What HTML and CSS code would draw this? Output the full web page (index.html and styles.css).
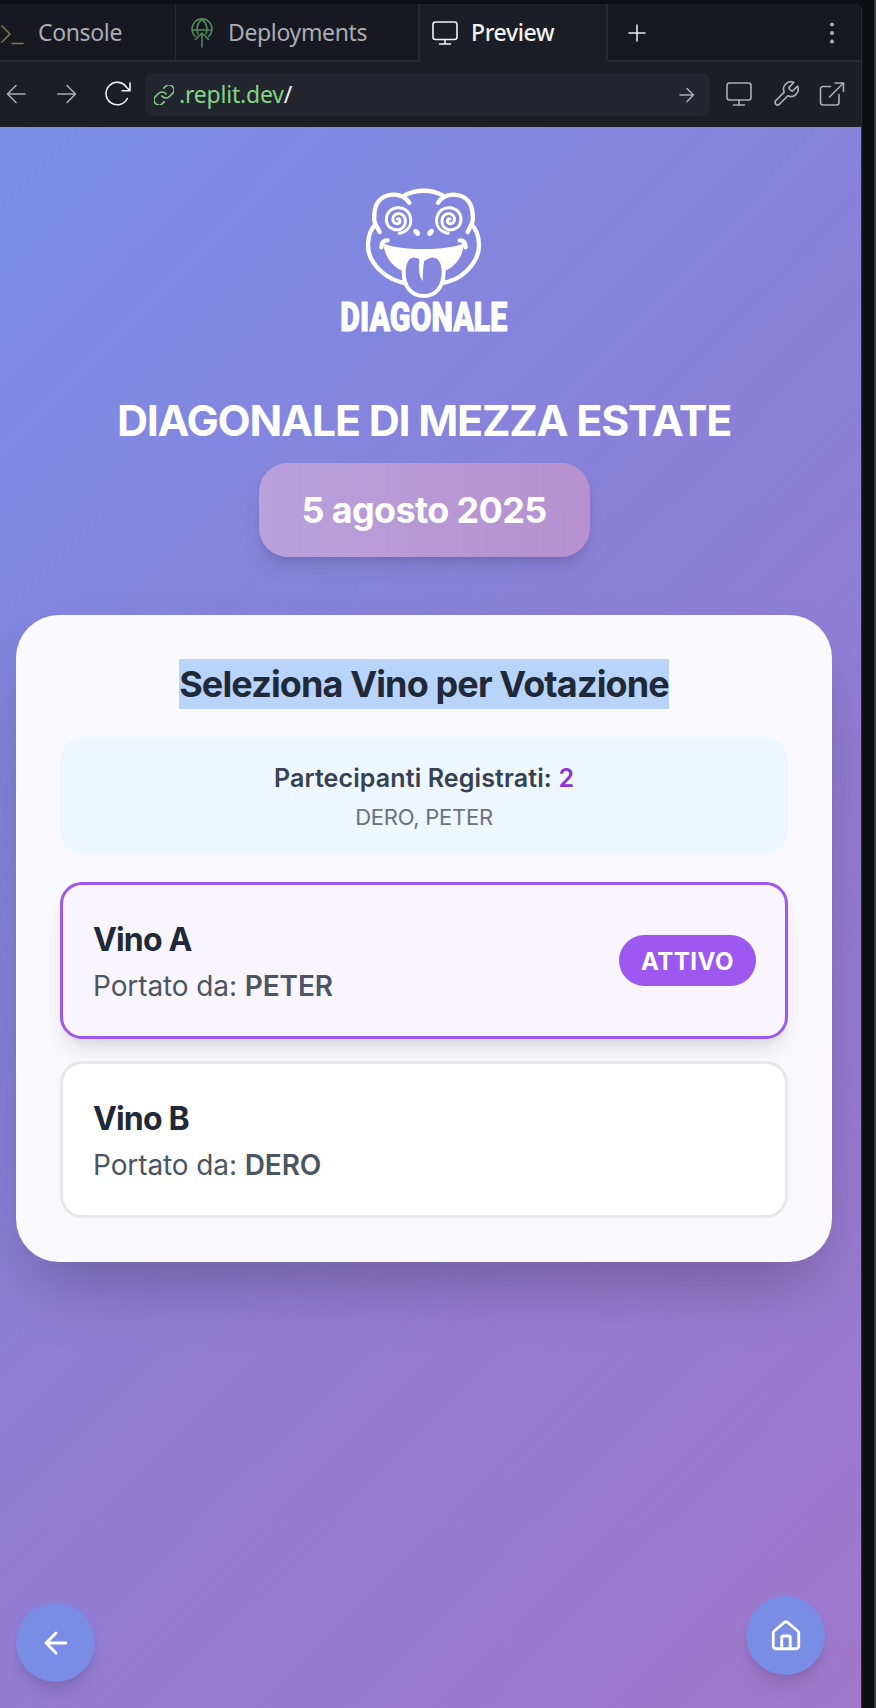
FILE: index.html
```html
<!DOCTYPE html>
<html lang="it">
<head>
<meta charset="utf-8">
<title>Diagonale di Mezza Estate</title>
<link rel="stylesheet" href="styles.css">
</head>
<body>
<div class="window">
  <div class="pane">
    <nav class="tabs">
      <div class="tab tab-console">
        <svg class="ic-console" width="24" height="28" viewBox="0 0 24 28"><path d="M2 7l8 8-8 8M12 24.500h11"/></svg>
        <span class="t-console">Console</span>
      </div>
      <div class="tab tab-deploy">
        <svg class="ic-deploy" width="22" height="30" viewBox="0 0 22 30"><path d="M4.500 18.500A10 10 0 1 1 17.500 18.500M1.500 12h19M11 1.500C5.500 5 5.500 12 7 16M11 1.500C16.500 5 16.500 12 15 16M11 29V15M4.500 21.500L11 15l6.500 6.500"/></svg>
        <span class="t-deploy">Deployments</span>
      </div>
      <div class="tab tab-preview">
        <svg width="26" height="26" viewBox="0 0 26 26"><rect x="1" y="2" width="24" height="17.500" rx="2.500"/><path d="M13 19.500V24M7.500 24h11"/></svg>
        <span class="t-preview">Preview</span>
      </div>
      <div class="tab-rest">
        <svg width="18" height="18" viewBox="0 0 18 18"><path d="M9 1v16M1 9h16"/></svg>
        <svg class="ic-dots" width="6" height="24" viewBox="0 0 6 24"><circle cx="3" cy="3.500" r="2"/><circle cx="3" cy="12" r="2"/><circle cx="3" cy="20.500" r="2"/></svg>
      </div>
    </nav>
    <div class="toolbar">
      <svg class="ic-back" width="20" height="20" viewBox="0 0 20 20"><path d="M19 10H1.500M10 1.500L1.500 10l8.500 8.500"/></svg>
      <svg class="ic-next" width="20" height="20" viewBox="0 0 20 20"><path d="M1 10h17.500M10 1.500l8.500 8.500-8.500 8.500"/></svg>
      <svg class="ic-reload" width="28" height="26" viewBox="0 0 28 26"><path d="M23.300 17.500A11.200 11.200 0 1 1 22.500 6.200L26 9.800M26 2v7.800h-7.800"/></svg>
      <div class="url">
        <svg class="ic-link" width="20" height="20" viewBox="2 2 20 20"><path d="M10 13a5 5 0 0 0 7.540.54l3-3a5 5 0 0 0-7.070-7.070l-1.720 1.710M14 11a5 5 0 0 0-7.540-.54l-3 3a5 5 0 0 0 7.070 7.070l1.710-1.710"/></svg>
        <span class="host">.replit.dev<b>/</b></span>
        <svg class="ic-go" width="16" height="16" viewBox="0 0 16 16"><path d="M1 8h13.500M8 1.500L14.500 8 8 14.500"/></svg>
      </div>
      <svg class="ic-screen" width="28" height="26" viewBox="0 0 28 26"><rect x="2" y="2" width="24" height="17" rx="2.500"/><path d="M14 19v5M8.500 24h11"/></svg>
      <svg class="ic-wrench" width="28" height="28" viewBox="0.500 0.500 23 23"><path d="M14.700 6.300a1 1 0 0 0 0 1.400l1.600 1.600a1 1 0 0 0 1.400 0l3.770-3.770a6 6 0 0 1-7.940 7.940l-6.910 6.910a2.120 2.120 0 0 1-3-3l6.910-6.910a6 6 0 0 1 7.940-7.940l-3.760 3.760z"/></svg>
      <svg class="ic-open" width="26" height="26" viewBox="0 0 26 26"><path d="M11.500 5.500H4a2.500 2.500 0 0 0-2.500 2.500v13.500A2.500 2.500 0 0 0 4 24h13.500a2.500 2.500 0 0 0 2.500-2.500V13.500M16 2h8.500v8.500M24.500 2L10.500 16"/></svg>
    </div>
    <main class="page">
      <svg class="logo" width="210" height="180" viewBox="0 0 630 540">
        <g class="line">
          <path d="M250 78C285 57 337 57 372 78"/>
          <path d="M268 98C242 62 193 71 175 95C162 112 160 146 165 160L179 186"/>
          <path d="M354 98C380 62 428 71 446 95C459 112 461 146 456 160L443 186"/>
          <path d="M166 163C139 193 137 245 160 277C182 310 218 333 254 339"/>
          <path d="M455 163C482 193 484 245 461 277C439 310 404 333 367 339"/>
          <path d="M184 232C184 217 192 211 203 211M437 232C437 217 430 211 419 211"/>
        </g>
        <g class="spiral">
          <path d="M238 190C264 184 274 166 272 147C269 123 251 112 234 113C212 114 198 130 199 150C201 171 216 180 233 180C250 178 258 164 256 149C254 136 243 129 232 131C221 134 217 143 219 152C222 162 234 164 239 157C242 150 238 145 232 147"/>
          <path d="M384 190C358 184 348 166 350 147C353 123 371 112 388 113C410 114 424 130 423 150C421 171 406 180 389 180C372 178 364 164 366 149C368 136 379 129 390 131C401 134 405 143 403 152C400 162 388 164 383 157C380 150 384 145 390 147"/>
        </g>
        <path class="solid" d="M190 220C230 243 390 243 432 220C430 260 402 297 364 306L258 306C220 297 193 260 190 220Z"/>
        <path class="tongue" d="M304 265C270 242 251 270 251 306C251 350 275 378 311 378C348 378 371 350 371 306C371 270 350 242 316 264C311 270 306 266 304 265Z"/>
        <path class="solid" d="M299 262Q306 270 314 263Q308 294 308 334Q292 315 299 262Z"/>
        <ellipse class="solid" cx="290" cy="187" rx="8" ry="12" transform="rotate(-40 290 187)"/>
        <ellipse class="solid" cx="332" cy="187" rx="8" ry="12" transform="rotate(40 332 187)"/>
        <text x="61" y="482" textLength="501" lengthAdjust="spacingAndGlyphs">DIAGONALE</text>
      </svg>
      <h1>DIAGONALE DI MEZZA ESTATE</h1>
      <div class="date"><span>5 agosto 2025</span></div>
      <section class="card">
        <h2><span>Seleziona Vino per Votazione</span></h2>
        <div class="info">
          <p class="count">Partecipanti Registrati: <b>2</b></p>
          <p class="names">DERO, PETER</p>
        </div>
        <div class="wine active">
          <div>
            <h3>Vino A</h3>
            <p>Portato da: <b>PETER</b></p>
          </div>
          <span class="pill">ATTIVO</span>
        </div>
        <div class="wine">
          <div>
            <h3>Vino B</h3>
            <p>Portato da: <b>DERO</b></p>
          </div>
        </div>
      </section>
      <footer>
        <button class="round" aria-label="Indietro"><svg width="34" height="34" viewBox="0 0 24 24"><path d="M12 19l-7-7 7-7M19 12H5"/></svg></button>
        <button class="round home" aria-label="Home"><svg width="34" height="34" viewBox="0 0 24 24"><path d="M15 21v-8a1 1 0 0 0-1-1h-4a1 1 0 0 0-1 1v8"/><path d="M3 10a2 2 0 0 1 .71-1.530l7-6a2 2 0 0 1 2.580 0l7 6A2 2 0 0 1 21 10v9a2 2 0 0 1-2 2H5a2 2 0 0 1-2-2z"/></svg></button>
      </footer>
    </main>
  </div>
</div>
</body>
</html>
```

FILE: styles.css
```css
* { box-sizing: border-box; }
body { margin: 0; background: #0e0f13; font-family: Inter, sans-serif; }
h1, h2, h3, p { margin: 0; }
svg { flex: none; display: block; fill: none; stroke: currentColor; stroke-width: 1.6; stroke-linecap: round; stroke-linejoin: round; }
.window { width: 876px; height: 1708px; padding-top: 4px; border-right: 2px solid #37383d; background: #0e0f13; overflow: hidden; }
.pane { width: 862px; height: 1704px; display: flex; flex-direction: column; border-top-right-radius: 7px; overflow: hidden; border-right: 1px solid #2b2c3b; background: #1b1e24; }

.tabs { display: flex; height: 58px; flex: none; font-family: "Noto Sans", sans-serif; font-size: 23px; letter-spacing: -.35px; color: #a9adb6; }
.tab, .tab-rest { display: flex; align-items: center; background: #181820; border-bottom: 2px solid #262932; }
.tab { white-space: nowrap; }
.tab-console { width: 176px; border-right: 1px solid #262932; }
.tab-deploy { width: 244px; padding-left: 15px; border-right: 2px solid #262932; }
.tab-preview { width: 188px; padding-left: 12px; background: #1b1e24; border-bottom-color: #1b1e24; border-right: 2px solid #262932; color: #f1f2f4; }
.tab-rest { flex: 1; justify-content: space-between; padding: 2px 26px 0 20px; color: #e8e9ec; }
.tab svg { margin-top: 2px; }
.tabs .ic-console { color: #837750; margin-right: 14px; }
.tabs .ic-deploy { color: #51855a; margin-right: 15px; }
.tabs .ic-dots { fill: #a9adb6; stroke: none; }
.t-preview { margin-left: 13px; font-weight: 500; }

.toolbar { display: flex; align-items: center; height: 65px; flex: none; color: #a9adb6; }
.toolbar > svg { margin-bottom: 1px; }
.toolbar .ic-back { margin-left: 6px; }
.toolbar .ic-next { margin-left: 31px; }
.toolbar .ic-reload { margin-left: 27px; color: #eff0f2; }
.url { display: flex; align-items: center; width: 565px; height: 43px; margin-left: 13px; padding: 0 15px 0 9px; border-radius: 8px; background: #23262e; color: #86d486; font-family: "Noto Sans", sans-serif; font-size: 23px; letter-spacing: -.2px; }
.ic-link { margin-right: 5px; }
.host { padding-bottom: 2px; }
.host b { font-weight: 400; color: #eff0f2; }
.url .ic-go { margin-left: auto; color: #a9adb6; }
.ic-screen { margin-left: 15px; }
.ic-wrench { margin-left: 19px; stroke-width: 1.35; }
.ic-open { margin-left: 19px; }

.page { flex: 1; display: flex; flex-direction: column; align-items: center; padding: 43px 29px 26px 16px; background: linear-gradient(135deg, #798ee6 0%, #8b80d8 42%, #a078cc 100%); }
.logo { position: relative; left: 1px; overflow: visible; color: #fff; }
.line { stroke-width: 13; }
.spiral { stroke-width: 9; }
.solid { fill: #fff; stroke: none; }
.tongue { fill: #8587de; stroke-width: 12; }
.logo text { fill: #fff; stroke: #fff; stroke-width: 3; font: 900 122px Roboto, sans-serif; }
h1 { margin-top: 46px; font-size: 43px; line-height: 49px; font-weight: 700; letter-spacing: -1.25px; color: #fff; white-space: nowrap; }
.date { display: flex; align-items: center; justify-content: center; width: 331px; height: 94px; flex: none; margin-top: 18px; border-radius: 29px; background: linear-gradient(90deg, #b9a1dc, #b690cf); box-shadow: 0 13px 20px -4px rgba(0,0,0,.12), 0 5px 8px -5px rgba(0,0,0,.12); font-size: 36px; font-weight: 700; letter-spacing: -.65px; color: #fff; white-space: nowrap; }
.card { width: 816px; height: 647px; flex: none; margin-top: 58px; padding: 44px; border-radius: 43px; background: #f9f9fd; box-shadow: 0 34px 68px -16px rgba(0,0,0,.27); }
h2 { display: flex; justify-content: center; height: 50px; font-size: 36px; line-height: 50px; font-weight: 700; letter-spacing: -.87px; color: #1f2937; white-space: nowrap; }
h2 span { background: #b8d4fb; }
.info { height: 115px; margin-top: 29px; padding-top: 22px; border-radius: 21px; background: #eef6fe; text-align: center; }
.count { font-size: 25px; line-height: 36px; font-weight: 600; letter-spacing: .12px; color: #374151; }
.count b { font-weight: 600; color: #8a35dc; }
.names { margin-top: 6px; font-size: 22px; line-height: 30px; letter-spacing: -.25px; color: #6b7280; }
.wine { display: flex; align-items: center; justify-content: space-between; height: 157px; margin-top: 22px; padding: 0 29px 0 30px; border: 3px solid #e5e7eb; border-radius: 22px; background: #fff; }
.active { margin-top: 29px; border-color: #9d58f0; background: #f8f5ff; box-shadow: 0 14px 20px -4px rgba(0,0,0,.1), 0 5px 8px -5px rgba(0,0,0,.1); }
h3 { padding-top: 1px; font-size: 32px; line-height: 48px; font-weight: 700; letter-spacing: -.85px; color: #1f2937; }
.wine p { margin-top: 2px; font-size: 28px; line-height: 40px; letter-spacing: -.1px; color: #4b5563; }
.wine p b { font-weight: 600; }
.pill { display: flex; align-items: center; justify-content: center; width: 137px; height: 51px; padding-top: 1px; border-radius: 26px; background: #9d58f0; font-size: 24px; font-weight: 700; letter-spacing: .5px; color: #fff; }
footer { display: flex; align-items: flex-end; justify-content: space-between; width: 816px; margin-top: auto; padding-right: 7px; }
.round { display: flex; align-items: center; justify-content: center; width: 79px; height: 79px; padding: 0; border: 0; border-radius: 50%; background: #798de4; color: #fff; box-shadow: 0 13px 20px -4px rgba(0,0,0,.12), 0 5px 8px -5px rgba(0,0,0,.12); }
.round svg { stroke-width: 2; }
.home { margin-bottom: 7px; }
```
